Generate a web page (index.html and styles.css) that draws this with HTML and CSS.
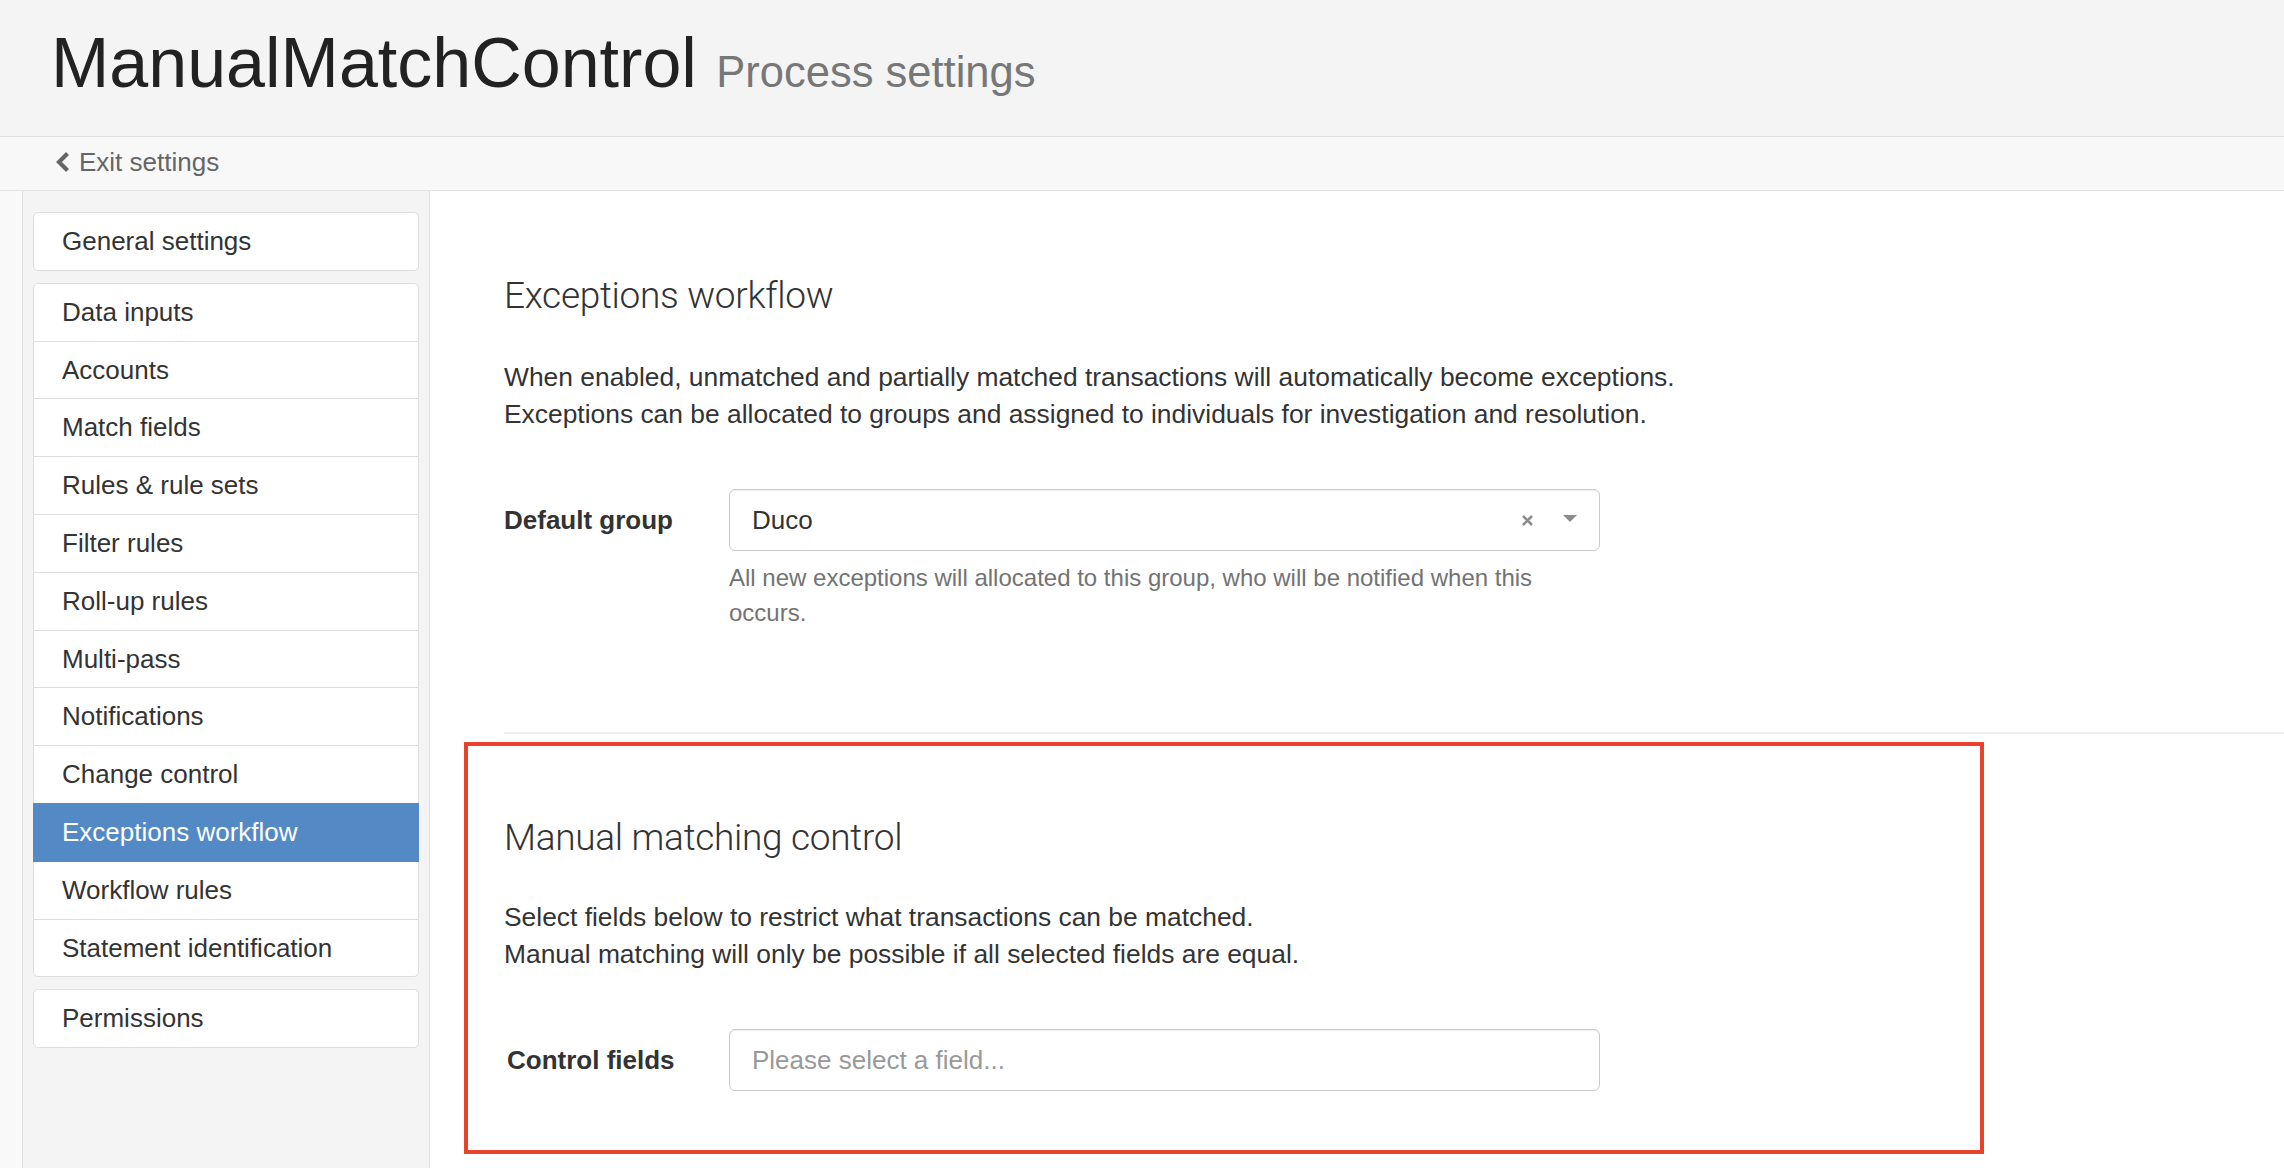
FILE: index.html
```html
<!DOCTYPE html>
<html lang="en">
<head>
    <meta charset="UTF-8">
    <meta name="viewport" content="width=device-width, initial-scale=1.0">
    <title>ManualMatchControl - Process settings</title>
    <link rel="stylesheet" href="styles.css">
</head>
<body>
    <header class="page-header">
        <h1 class="page-title">ManualMatchControl <small>Process settings</small></h1>
    </header>

    <div class="subnav">
        <a class="back-link" href="#">
            <svg class="back-icon" width="16" height="22" viewBox="0 0 16 22">
                <polyline points="12.5,2.5 4,11 12.5,19.5" fill="none" stroke="#666" stroke-width="4.2"/>
            </svg>Exit settings
        </a>
    </div>

    <div class="layout">
        <aside class="sidebar">
            <ul class="nav-group">
                <li class="nav-item">General settings</li>
            </ul>
            <ul class="nav-group">
                <li class="nav-item">Data inputs</li>
                <li class="nav-item">Accounts</li>
                <li class="nav-item">Match fields</li>
                <li class="nav-item">Rules &amp; rule sets</li>
                <li class="nav-item">Filter rules</li>
                <li class="nav-item">Roll-up rules</li>
                <li class="nav-item">Multi-pass</li>
                <li class="nav-item">Notifications</li>
                <li class="nav-item">Change control</li>
                <li class="nav-item active">Exceptions workflow</li>
                <li class="nav-item">Workflow rules</li>
                <li class="nav-item">Statement identification</li>
            </ul>
            <ul class="nav-group">
                <li class="nav-item">Permissions</li>
            </ul>
        </aside>

        <main class="content">
            <section class="settings-section">
                <h3 class="section-title">Exceptions workflow</h3>
                <p class="section-text">
                    When enabled, unmatched and partially matched transactions will automatically become exceptions.<br>
                    Exceptions can be allocated to groups and assigned to individuals for investigation and resolution.
                </p>
                <div class="form-row">
                    <label class="form-label">Default group</label>
                    <div class="form-field">
                        <div class="select-box">
                            <span class="select-value">Duco</span>
                            <svg class="select-clear" width="13" height="13" viewBox="0 0 13 13">
                                <path d="M2 2 L11 11 M11 2 L2 11" stroke="#8c8c8c" stroke-width="2.6"/>
                            </svg>
                            <svg class="select-caret" width="14" height="8" viewBox="0 0 14 8">
                                <path d="M0 0 H14 L7 7 Z" fill="#8c8c8c"/>
                            </svg>
                        </div>
                        <p class="help-text">All new exceptions will allocated to this group, who will be notified when this occurs.</p>
                    </div>
                </div>
            </section>

            <hr class="section-divider">

            <section class="settings-section highlighted">
                <h3 class="section-title">Manual matching control</h3>
                <p class="section-text">
                    Select fields below to restrict what transactions can be matched.<br>
                    Manual matching will only be possible if all selected fields are equal.
                </p>
                <div class="form-row">
                    <label class="form-label">Control fields</label>
                    <div class="form-field">
                        <div class="select-box">
                            <span class="select-placeholder">Please select a field...</span>
                        </div>
                    </div>
                </div>
            </section>
        </main>
    </div>
</body>
</html>
```

FILE: styles.css
```css
body {
    margin: 0;
    font-family: "Liberation Sans", Arial, Helvetica, sans-serif;
    font-size: 26px;
    line-height: 36.6px;
    color: #333;
    background: #fff;
}

.page-header {
    height: 137px;
    box-sizing: border-box;
    padding: 25px 0 0 51px;
    background-color: #f4f4f4;
    border-bottom: 1px solid #dedede;
}

.page-title {
    margin: 0;
    font-size: 70px;
    line-height: 1.1;
    font-weight: normal;
    color: #222;
}

.page-title small {
    font-size: 43.5px;
    color: #777;
}

.subnav {
    height: 54px;
    box-sizing: border-box;
    padding: 7px 0 0 55px;
    background-color: #f8f8f8;
    border-bottom: 1px solid #e4e4e4;
}

.back-link {
    color: #666;
    text-decoration: none;
}

.back-icon {
    vertical-align: -2px;
    margin-right: 8px;
}

.layout {
    display: flex;
    min-height: 977px;
    padding-left: 22px;
    background-color: #f9f9f9;
}

.sidebar {
    width: 408px;
    flex-shrink: 0;
    box-sizing: border-box;
    padding: 21px 10px;
    background-color: #f4f4f4;
    border-left: 1px solid #e2e2e2;
    border-right: 1px solid #e2e2e2;
}

.nav-group {
    list-style: none;
    margin: 0 0 13px;
    padding: 0;
}

.nav-item {
    position: relative;
    padding: 10px 28px;
    line-height: 36.8px;
    background-color: #fff;
    border: 1px solid #ddd;
    margin-bottom: -1px;
    color: #333;
}

.nav-item:first-child {
    border-top-left-radius: 5px;
    border-top-right-radius: 5px;
}

.nav-item:last-child {
    border-bottom-left-radius: 5px;
    border-bottom-right-radius: 5px;
}

.nav-item.active {
    z-index: 1;
    color: #fff;
    background-color: #538ac6;
    border-color: #538ac6;
}

.content {
    flex: 1;
    background-color: #fff;
    padding: 83px 0 0 74px;
}

.section-title {
    margin: 0 0 41px;
    font-family: Roboto, "Liberation Sans", Arial, sans-serif;
    font-weight: 300;
    font-size: 37px;
    letter-spacing: -0.3px;
    line-height: 44px;
    color: #333;
}

.section-text {
    margin: 0;
    font-size: 26.4px;
}

.form-row {
    display: flex;
    align-items: flex-start;
    margin-top: 57px;
}

.form-label {
    width: 225px;
    flex-shrink: 0;
    box-sizing: border-box;
    padding-top: 13px;
    font-weight: bold;
}

.form-field {
    width: 871px;
}

.select-box {
    display: flex;
    align-items: center;
    height: 62px;
    box-sizing: border-box;
    padding: 0 22px;
    background-color: #fff;
    border: 1px solid #ccc;
    border-radius: 6px;
    box-shadow: inset 0 1px 1px rgba(0, 0, 0, 0.075);
}

.select-value {
    flex: 1;
    color: #333;
}

.select-placeholder {
    flex: 1;
    color: #999;
}

.select-clear {
    margin-right: 29px;
}

.select-caret {
    margin-top: -3px;
}

.help-text {
    margin: 9px 0 0;
    font-size: 24px;
    line-height: 35px;
    color: #737373;
}

.section-divider {
    margin: 102px 0 0;
    border: 0;
    border-top: 2px solid #f0f0f0;
}

.settings-section.highlighted {
    width: 1520px;
    box-sizing: border-box;
    margin: 8px 0 0 -40px;
    padding: 70px 36px 59px;
    border: 4px solid #e8412c;
}

.highlighted .section-title {
    margin-bottom: 39px;
}

.highlighted .form-label {
    padding-left: 3px;
}
```
